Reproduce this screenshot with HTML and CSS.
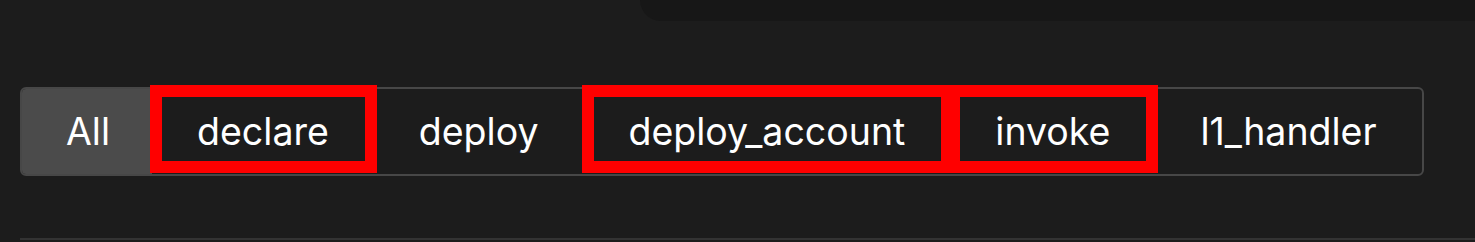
FILE: index.html
```html
<!DOCTYPE html>
<html lang="en">
<head>
    <meta charset="UTF-8">
    <meta name="viewport" content="width=device-width, initial-scale=1.0">
    <title>Transactions</title>
    <link rel="stylesheet" href="styles.css">
</head>
<body>
    <div class="top">
        <div class="top-panel"></div>
    </div>

    <div class="tabs">
        <button class="tab active">All</button>
        <button class="tab marked">declare</button>
        <button class="tab">deploy</button>
        <button class="tab marked">deploy_account</button>
        <button class="tab marked">invoke</button>
        <button class="tab">l1_handler</button>
    </div>

    <div class="table"></div>
</body>
</html>
```

FILE: styles.css
```css
body {
    margin: 0;
    background-color: #1c1c1c;
    font-family: Inter, "Noto Sans", sans-serif;
    color: #fff;
    overflow: hidden;
}
.top {
    display: flex;
    justify-content: flex-end;
}
.top-panel {
    width: 835px;
    height: 21px;
    background-color: #171717;
    border-bottom-left-radius: 22px;
}
.tabs {
    display: inline-flex;
    margin: 66px 0 0 20px;
    border: 2px solid #474747;
    border-radius: 6px;
}
.tab {
    position: relative;
    height: 85px;
    padding: 0 45px;
    background: none;
    border: none;
    color: #fff;
    font-family: inherit;
    font-size: 37.5px;
    cursor: pointer;
}
.tab.active {
    padding: 0 42px 0 44px;
    background-color: #4b4b4b;
    border-radius: 4px 0 0 4px;
}
/* red marker boxes over the selected tabs */
.tab.marked::after {
    content: "";
    position: absolute;
    top: -4px;
    left: -2px;
    right: -3px;
    bottom: 1px;
    border: 12px solid #ff0000;
}
.table {
    margin: 62px 0 0 20px;
    border-top: 2px solid #333;
    height: 10px;
}
```
